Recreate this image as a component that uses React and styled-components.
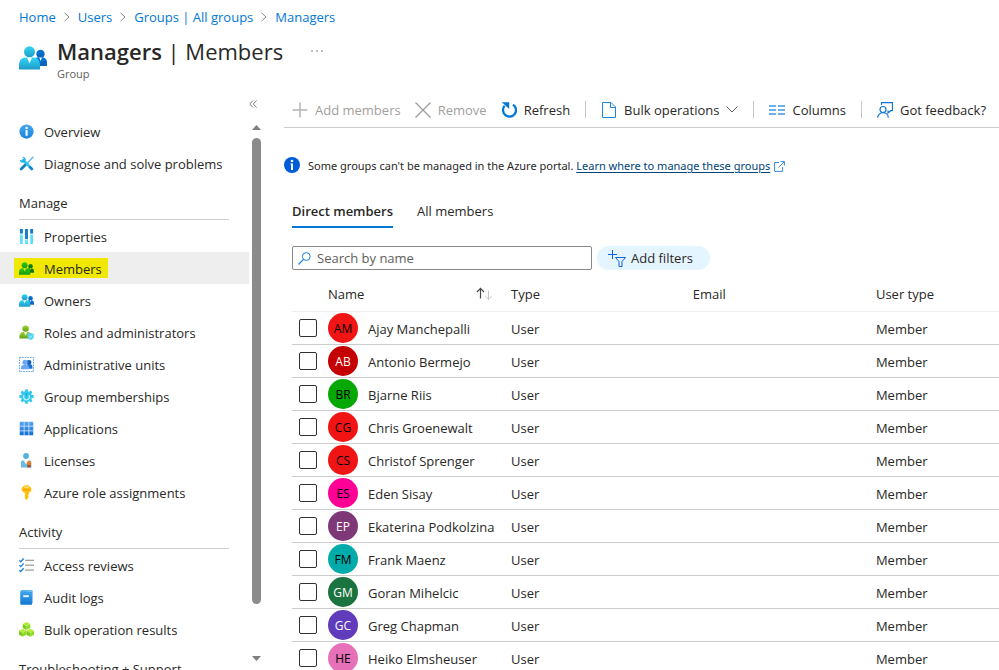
import React from "react";
import styled, { createGlobalStyle, css } from "styled-components";

const color = {
  text: "#292827",
  muted: "#605e5c",
  disabled: "#a19f9d",
  link: "#0078d4",
  rule: "#cccccc",
};

const GlobalStyle = createGlobalStyle`
  *, *::before, *::after { box-sizing: border-box; }
  html, body { margin: 0; padding: 0; background: #ffffff; }
  body {
    color: ${color.text};
    font-family: "Open Sans", "Noto Sans", sans-serif;
    font-size: 13px;
    line-height: 20px;
    overflow: hidden;
  }
  button, input { font: inherit; color: inherit; }
`;

/* ---------- shell ---------- */

const Page = styled.div`
  display: flex;
  flex-direction: column;
  height: 100vh;
  overflow: hidden;
`;

const Breadcrumbs = styled.nav`
  display: flex;
  align-items: center;
  flex: none;
  gap: 7px;
  height: 34px;
  padding: 0 19px;
  white-space: nowrap;
`;

const CrumbLink = styled.a`
  color: ${color.link};
  text-decoration: none;
`;

const Header = styled.header`
  display: flex;
  flex: none;
  height: 58px;
  padding: 2px 19px 0;
`;

const HeaderIcon = styled.div`
  display: flex;
  width: 38px;
  padding-top: 10px;
`;

const TitleBlock = styled.div`
  display: flex;
  flex-direction: column;
`;

const Title = styled.h1`
  margin: 0;
  font-size: 22px;
  font-weight: 400;
  line-height: 30px;
  white-space: nowrap;

  strong { font-weight: 600; }
`;

const Subtitle = styled.span`
  color: ${color.muted};
  font-size: 11px;
  line-height: 16px;
`;

const MoreButton = styled.button`
  display: flex;
  align-items: center;
  justify-content: center;
  width: 16px;
  height: 30px;
  margin-left: 26px;
  padding: 0;
  border: 0;
  background: none;
`;

const Body = styled.div`
  display: flex;
  flex: 1;
  min-height: 0;
`;

/* ---------- sidebar ---------- */

const Sidebar = styled.aside`
  display: grid;
  grid-template-columns: 249px 14px;
  grid-template-rows: 23px minmax(0, 1fr);
  flex: none;
  width: 284px;
`;

const CollapseButton = styled.button`
  grid-column: 2;
  display: flex;
  align-items: center;
  justify-content: center;
  width: 8px;
  padding: 0;
  border: 0;
  background: none;
`;

const Menu = styled.nav`
  grid-column: 1;
  overflow: hidden;
`;

const MenuList = styled.ul`
  margin: 0;
  padding: 0;
  list-style: none;
`;

const MenuHeading = styled.h2`
  display: flex;
  align-items: center;
  height: 41px;
  margin: 0 20px 0 19px;
  padding-top: 8px;
  border-bottom: 1px solid ${color.rule};
  font-size: 13px;
  font-weight: 400;
`;

const MenuLink = styled.a`
  display: flex;
  align-items: center;
  height: 32px;
  padding: 0 14px;
  color: inherit;
  text-decoration: none;
  background: ${(p) => (p.$selected ? "#eeeeee" : "transparent")};
`;

const MenuLabel = styled.span`
  display: flex;
  align-items: center;
  gap: 10px;
  height: 20px;
  padding: 0 6px 0 5px;
  white-space: nowrap;
  background: ${(p) => (p.$highlight ? "#f0e800" : "transparent")};

  svg { flex: none; }
`;

const MenuText = styled.span`
  padding-top: 2px;
`;

const ScrollBar = styled.div`
  grid-column: 2;
  display: flex;
  flex-direction: column;
  align-items: center;
  width: 9px;
  margin-left: 3px;
  padding: 10px 0 9px;
`;

const ScrollTrack = styled.div`
  flex: 1;
  width: 9px;
  margin: 8px 0 0;
`;

const ScrollThumb = styled.div`
  height: 90%;
  border-radius: 5px;
  background: #8b8b8b;
`;

/* ---------- main column ---------- */

const Main = styled.main`
  display: flex;
  flex-direction: column;
  flex: 1;
  min-width: 0;
`;

const Toolbar = styled.div`
  display: flex;
  align-items: center;
  flex: none;
  height: 36px;
  padding-left: 1px;
  border-bottom: 1px solid ${color.rule};
`;

const ToolButton = styled.button`
  display: flex;
  align-items: center;
  gap: 7px;
  flex: none;
  height: 32px;
  padding: 0 7px;
  border: 0;
  background: none;
  white-space: nowrap;

  &:disabled { color: ${color.disabled}; }
`;

const Separator = styled.span`
  flex: none;
  width: 1px;
  height: 17px;
  margin: 0 8px;
  background: #c8c6c4;
`;

const Notice = styled.div`
  display: flex;
  align-items: center;
  flex: none;
  height: 24px;
  margin-top: 25px;
  font-family: "Noto Sans", "Open Sans", sans-serif;
  font-size: 11px;
  white-space: nowrap;

  > svg:first-child { margin-right: 8px; }
`;

const NoticeText = styled.span`
  padding-top: 2px;
`;

const NoticeLink = styled.a`
  display: inline-flex;
  align-items: center;
  gap: 4px;
  color: #004578;
  text-underline-offset: 2px;
`;

const Content = styled.div`
  padding-left: 8px;
`;

const Tabs = styled.div`
  display: flex;
  gap: 24px;
  height: 28px;
  margin-top: 23px;
`;

const Tab = styled.button`
  padding: 0 0 4px;
  border: 0;
  border-bottom: 2px solid transparent;
  background: none;
  white-space: nowrap;
  ${(p) =>
    p.$active &&
    css`
      border-bottom-color: ${color.link};
      font-weight: 600;
    `}
`;

const Filters = styled.div`
  display: flex;
  gap: 5px;
  margin-top: 18px;
`;

const SearchBox = styled.label`
  display: flex;
  align-items: center;
  gap: 6px;
  width: 300px;
  height: 24px;
  padding: 0 5px;
  border: 1px solid #8a8886;
  border-radius: 2px;
`;

const SearchInput = styled.input`
  flex: 1;
  min-width: 0;
  height: 20px;
  padding: 0;
  border: 0;
  outline: 0;
  background: none;

  &::placeholder { color: ${color.muted}; opacity: 1; }
`;

const FilterPill = styled.button`
  display: flex;
  align-items: center;
  gap: 5px;
  height: 24px;
  padding: 0 17px 0 11px;
  border: 0;
  border-radius: 12px;
  background: #e5f5ff;
  white-space: nowrap;
`;

const Table = styled.table`
  width: 100%;
  margin-top: 7px;
  border-collapse: collapse;
  table-layout: fixed;
`;

const Col = styled.col`
  width: ${(p) => p.$width};
`;

const HeadCell = styled.th`
  height: 34px;
  padding: 0;
  border-bottom: 1px solid #eeeeee;
  font-weight: 400;
  text-align: left;
`;

const SortHeader = styled.div`
  display: flex;
  align-items: center;
  justify-content: space-between;
  padding-right: 18px;
`;

const Cell = styled.td`
  height: 33px;
  padding: 2px 0 0;
  border-bottom: 1px solid ${color.rule};
  white-space: nowrap;
`;

const CheckCell = styled(Cell)`
  padding: 0 0 0 7px;
`;

const PersonCell = styled(Cell)`
  padding: 0;
`;

const Check = styled.input`
  display: block;
  appearance: none;
  width: 18px;
  height: 18px;
  margin: 0;
  border: 1px solid #323130;
  border-radius: 2px;
  background: #ffffff;

  &:checked { background: ${color.link}; }
`;

const Person = styled.div`
  display: flex;
  align-items: center;
  gap: 10px;
`;

const PersonName = styled.span`
  padding-top: 2px;
`;

const Avatar = styled.span`
  display: flex;
  align-items: center;
  justify-content: center;
  width: 30px;
  height: 30px;
  padding-top: 2px;
  border-radius: 50%;
  font-size: 12px;
  color: ${(p) => (p.$light ? "#ffffff" : "#000000")};
  background: ${(p) => p.$tone};
`;

/* ---------- icons ---------- */

const Svg = ({ size = 15, w, h, box = "0 0 16 16", children }) => (
  <svg width={w || size} height={h || size} viewBox={box} fill="none" aria-hidden="true">
    {children}
  </svg>
);

const Gradient = ({ id, from, to }) => (
  <linearGradient id={id} x1="0" y1="0" x2="0" y2="1">
    <stop offset="0" stopColor={from} />
    <stop offset="1" stopColor={to} />
  </linearGradient>
);

const PeopleIcon = ({ id, w = 15, h = 13, notch = "#ffffff", front = ["#32d4f5", "#1c9cc8"], back = ["#0078d4", "#1160b8"] }) => (
  <Svg w={w} h={h} box="0 0 28 24">
    <defs>
      <Gradient id={`${id}f`} from={front[0]} to={front[1]} />
      <Gradient id={`${id}b`} from={back[0]} to={back[1]} />
    </defs>
    <circle cx="21.500" cy="8" r="4.200" fill={`url(#${id}b)`} />
    <path d="M14 20v-4.500c0-2.500 2-4 4.500-4h5c2.700 0 4.500 2.300 4.500 5V20z" fill={`url(#${id}b)`} />
    <path d="M20.200 11.500l1.400 3.500 1.400-3.500z" fill={notch} />
    <circle cx="10.500" cy="5.800" r="5.500" fill={`url(#${id}f)`} />
    <path d="M0 23.500v-4.500C0 14.500 2.500 11.500 6.500 11.500h8c4 0 6.500 3 6.500 7.500v4.500z" fill={`url(#${id}f)`} />
    <path d="M8 11.500l2.500 6 2.500-6z" fill={notch} />
  </Svg>
);

const OverviewIcon = () => (
  <Svg>
    <defs><Gradient id="ov" from="#4aa8f0" to="#1684dc" /></defs>
    <circle cx="8" cy="8" r="7.600" fill="url(#ov)" />
    <rect x="7" y="6.500" width="2.200" height="6" rx=".6" fill="#fff" />
    <circle cx="8.100" cy="4.300" r="1.300" fill="#fff" />
  </Svg>
);

const ToolsIcon = () => (
  <Svg>
    <path d="M2.300 13.800L8.500 7.800" stroke="#1482b8" strokeWidth="3" strokeLinecap="round" />
    <path d="M8.500 7.800L13.500 2.600l1.500-1.400" stroke="#69b8e8" strokeWidth="1.500" strokeLinecap="round" />
    <path d="M4.500 4.500l9 9" stroke="#2fc3ee" strokeWidth="2.800" strokeLinecap="round" />
    <path d="M.8 4c0 2.400 2 3.600 4 3.100l2.400-2.400C7.600 2.400 5.900.6 3.500.8l1.600 2L3.500 4.700z" fill="#25b4e4" />
    <path d="M12 10.300l3.500 3.500-1.900 1.900-3.500-3.500z" fill="#1288c8" />
  </Svg>
);

const PropertiesIcon = () => (
  <Svg>
    {[1, 6.500, 12].map((x, i) => (
      <g key={x}>
        <rect x={x} y="0" width="3" height="16" fill="#5ce0f8" />
        <rect x={x} y="0" width="3" height={i === 1 ? 11 : 5} fill="#1878cc" />
        <rect x={x} y={i === 1 ? 11 : 5} width="3" height="1" fill="#fff" />
      </g>
    ))}
  </Svg>
);

const RolesIcon = () => (
  <Svg>
    <defs><Gradient id="rl" from="#9fd435" to="#5e9f12" /></defs>
    <circle cx="7" cy="3.800" r="3.400" fill="url(#rl)" />
    <path d="M.5 14.500V12c0-3 2-4.600 4.400-4.600h4.400c2.200 0 4 1.600 4 4.600v2.500z" fill="url(#rl)" />
    <path d="M5.300 7.500L7 11.500l1.700-4z" fill="#fff" />
    <path d="M12.400 8.600l3.400 1.100v2.700c0 1.800-1.600 3-3.400 3.600-1.800-.6-3.400-1.800-3.400-3.600V9.700z" fill="#54d4f0" />
    <path d="M10.800 12.300l1.300 1.200 2-2.300" stroke="#c8f5ff" strokeWidth=".9" />
  </Svg>
);

const UnitsIcon = () => (
  <Svg>
    <rect x=".5" y=".5" width="15" height="15" stroke="#5aa0de" strokeDasharray="1.800 1" />
    <circle cx="10.600" cy="5.800" r="2.600" fill="#1260b8" />
    <path d="M8 12.500V10c0-1.500 1-2.200 2-2.200h2c1.200 0 2.300 1 2.300 2.200v2.500z" fill="#1b6fd0" />
    <circle cx="6.500" cy="5.600" r="2.800" fill="#6ba6f6" />
    <path d="M2 13v-1.500C2 9.700 3.300 8.500 5 8.500h3c1.700 0 3 1.200 3 3V13z" fill="#6ba6f6" />
  </Svg>
);

const GearIcon = () => (
  <Svg>
    <g fill="#32c8ee">
      {[0, 45, 90, 135].map((a) => (
        <rect key={a} x="6.500" y=".3" width="3" height="15.400" rx=".8" transform={`rotate(${a} 8 8)`} />
      ))}
      <circle cx="8" cy="8" r="5.800" />
    </g>
    <path d="M5.500 6.500a3.100 3.100 0 1 0 5 0" stroke="#c0f0fc" strokeWidth="1.200" />
    <path d="M8 4.500v3.500" stroke="#1ea4d4" strokeWidth="1.200" />
  </Svg>
);

const AppsIcon = () => (
  <Svg>
    <defs><Gradient id="ap" from="#5aa5f2" to="#0f6fd0" /></defs>
    <rect x=".8" y=".8" width="14.400" height="14.400" fill="url(#ap)" />
    <path d="M5.500 0v16M10.500 0v16M0 5.500h16M0 10.500h16" stroke="#cfe4fb" strokeWidth=".9" />
  </Svg>
);

const LicenseIcon = () => (
  <Svg>
    <circle cx="7.500" cy="3.200" r="3.100" fill="#50b4dc" />
    <path d="M2 15.500V9.800c0-1 .7-1.800 1.700-1.800H5l2.500 4L10 8h1.500c1 0 1.700.8 1.700 1.800v5.700z" fill="#6cbce0" />
    <path d="M9 12h3.500v4l-1.700-1.200L9 16z" fill="#a04a20" />
    <circle cx="10.700" cy="10.800" r="2.200" fill="#f07c1c" />
  </Svg>
);

const KeyIcon = () => (
  <Svg>
    <path d="M8 .3c3 0 5.200 1.800 5.200 4.300 0 1.800-1.100 3.100-2.700 3.900V10l-1 .9 1 1-1 1 .7.800L8 16l-1.700-1.500V8.500C4.200 7.900 2.800 6.500 2.800 4.600 2.800 2.100 5 .3 8 .3z" fill="#fdbf10" />
    <path d="M6.200 2.400h3.600" stroke="#fff2b0" strokeWidth="1.200" strokeLinecap="round" />
    <path d="M4.800 5.300h6.400" stroke="#f09a00" strokeWidth="1" />
  </Svg>
);

const ReviewsIcon = () => (
  <Svg>
    {[1, 6.200, 11.400].map((y) => (
      <g key={y}>
        <path d={`M.4 ${y + 1.500}l1.500 1.500L5 ${y - 0.500}`} stroke="#1b83dc" strokeWidth="1.400" />
        <path d={`M6.500 ${y + 1.500}H16`} stroke="#a0a0a0" strokeWidth="1.400" />
      </g>
    ))}
  </Svg>
);

const BookIcon = () => (
  <Svg>
    <defs><Gradient id="bk" from="#46a8ec" to="#1078d0" /></defs>
    <path d="M3 .3h10.700c.8 0 1.300.5 1.300 1.200V14H3z" fill="#8cc8f4" />
    <path d="M2.800 2h11v13.700h-11c-.8 0-1.500-.6-1.500-1.400V2.200C1.300 1.200 2 .3 3 .3h10.600v1z" fill="url(#bk)" />
    <rect x="4.500" y="5.600" width="6" height="2" fill="#eaf6ff" />
  </Svg>
);

const Cube = ({ x, y }) => (
  <g transform={`translate(${x} ${y})`}>
    <path d="M0-4l4 2.100L0 .4l-4-2.300z" fill="#b4ec38" />
    <path d="M-4-1.900L0 .4v4.200l-4-2.200z" fill="#78cc1c" />
    <path d="M4-1.900L0 .4v4.200l4-2.200z" fill="#90dc24" />
  </g>
);

const CubesIcon = () => (
  <Svg>
    <Cube x="8" y="4" />
    <Cube x="4" y="11.200" />
    <Cube x="12" y="11.200" />
  </Svg>
);

const ChevronRight = () => (
  <Svg w={8} h={10} box="0 0 8 10">
    <path d="M1.500.8L6 5 1.500 9.200" stroke="#8a8886" />
  </Svg>
);

const CollapseIcon = () => (
  <Svg w={8} h={8} box="0 0 8 8">
    <path d="M4 .5L.8 4 4 7.500M7.500.5L4.300 4l3.200 3.500" stroke="#6e6e6e" strokeWidth=".9" />
  </Svg>
);

const ArrowMark = ({ down }) => (
  <Svg w={9} h={5} box="0 0 9 5">
    <path d={down ? "M0 0h9L4.500 5z" : "M0 5h9L4.500 0z"} fill="#7e7e7e" />
  </Svg>
);

const MoreIcon = () => (
  <Svg w={12} h={2} box="0 0 12 2">
    <path d="M0 1h2M5 1h2M10 1h2" stroke="#808080" strokeWidth="1.200" />
  </Svg>
);

const PlusIcon = () => (
  <Svg size={16}><path d="M8 .5v15M.5 8h15" stroke="#b4b4b2" strokeWidth="1.500" /></Svg>
);

const CrossIcon = () => (
  <Svg size={16}><path d="M.5.5l15 15M15.500.5l-15 15" stroke="#9a9a98" strokeWidth="1.200" /></Svg>
);

const RefreshIcon = () => (
  <Svg size={16}>
    <path d="M12 2.600A6.500 6.500 0 1 1 3.600 3.800" stroke="#0078d4" strokeWidth="2.300" />
    <path d="M.8.300h7.400v6.700z" fill="#0078d4" />
  </Svg>
);

const DocIcon = () => (
  <Svg size={16}>
    <path d="M1.500.5h8.500l4.500 4.500v10.500h-13z" stroke="#1b86dc" />
    <path d="M9.500.5v5h5" stroke="#1b86dc" />
  </Svg>
);

const ChevronDown = () => (
  <Svg w={12} h={7} box="0 0 12 7"><path d="M.5.5L6 6 11.500.5" stroke="#605e5c" /></Svg>
);

const ColumnsIcon = () => (
  <Svg size={16}>
    <path d="M0 4h7M9 4h7M0 8h7M9 8h7M0 12h7M9 12h7" stroke="#6cb0ec" strokeWidth="2" />
  </Svg>
);

const FeedbackIcon = () => (
  <Svg size={16}>
    <g stroke="#0f74d0" strokeWidth="1.200">
      <path d="M4.500 3V.7h11v8h-1.800L11 11V8.500" />
      <circle cx="6" cy="7.500" r="3" />
      <path d="M.7 15.800c0-3 2.300-5.100 5.300-5.100s5.300 2.100 5.300 5.100" />
    </g>
  </Svg>
);

const InfoIcon = () => (
  <Svg size={16}>
    <circle cx="8" cy="8" r="8" fill="#015cda" />
    <circle cx="8" cy="4" r="1.300" fill="#fff" />
    <path d="M6.500 6.500H9V13H7V7.500h-.5z" fill="#fff" />
  </Svg>
);

const ExternalIcon = () => (
  <Svg size={11} box="0 0 11 11">
    <path d="M5 1.500H.6v8.900h8V6M6.500.6h3.900v3.900M10.200.8L4.500 6.500" stroke="#3b86e0" />
  </Svg>
);

const SearchIcon = () => (
  <Svg size={13} box="0 0 13 13">
    <circle cx="8.300" cy="4.500" r="3.900" stroke="#1b7fd6" />
    <path d="M5.500 7.400L.5 12.500" stroke="#1b7fd6" strokeWidth="1.200" />
  </Svg>
);

const AddFilterIcon = () => (
  <Svg w={18} h={17} box="0 0 18 17">
    <path d="M4.500 0v9M0 4.500h9" stroke="#0f62d8" />
    <path d="M7.500 7.500h10l-3.500 4v5h-3v-5z" stroke="#0f62d8" />
  </Svg>
);

const SortIcon = () => (
  <Svg w={17} h={14} box="0 0 17 14">
    <path d="M4.500 11.500V1.500M1 5l3.500-3.700L8 5" stroke="#4a4a4a" strokeWidth="1.200" />
    <path d="M12.500 3.500v9M9.300 9.300l3.200 3.200 3.200-3.200" stroke="#c4c8ca" />
  </Svg>
);

/* ---------- data ---------- */

const crumbs = ["Home", "Users", "Groups | All groups", "Managers"];

const menu = [
  {
    items: [
      { label: "Overview", icon: <OverviewIcon /> },
      { label: "Diagnose and solve problems", icon: <ToolsIcon /> },
    ],
  },
  {
    heading: "Manage",
    items: [
      { label: "Properties", icon: <PropertiesIcon /> },
      {
        label: "Members",
        selected: true,
        icon: (
          <PeopleIcon id="mem" notch="#f0e800" front={["#2fc818", "#1a9c10"]} back={["#138a10", "#087008"]} />
        ),
      },
      { label: "Owners", icon: <PeopleIcon id="own" /> },
      { label: "Roles and administrators", icon: <RolesIcon /> },
      { label: "Administrative units", icon: <UnitsIcon /> },
      { label: "Group memberships", icon: <GearIcon /> },
      { label: "Applications", icon: <AppsIcon /> },
      { label: "Licenses", icon: <LicenseIcon /> },
      { label: "Azure role assignments", icon: <KeyIcon /> },
    ],
  },
  {
    heading: "Activity",
    items: [
      { label: "Access reviews", icon: <ReviewsIcon /> },
      { label: "Audit logs", icon: <BookIcon /> },
      { label: "Bulk operation results", icon: <CubesIcon /> },
    ],
  },
  { heading: "Troubleshooting + Support", items: [] },
];

const members = [
  { initials: "AM", name: "Ajay Manchepalli", tone: "#f01414" },
  { initials: "AB", name: "Antonio Bermejo", tone: "#c40000", light: true },
  { initials: "BR", name: "Bjarne Riis", tone: "#06a806" },
  { initials: "CG", name: "Chris Groenewalt", tone: "#f01414" },
  { initials: "CS", name: "Christof Sprenger", tone: "#f01414" },
  { initials: "ES", name: "Eden Sisay", tone: "#ff0097" },
  { initials: "EP", name: "Ekaterina Podkolzina", tone: "#7e3878", light: true },
  { initials: "FM", name: "Frank Maenz", tone: "#00aba9" },
  { initials: "GM", name: "Goran Mihelcic", tone: "#1b7440", light: true },
  { initials: "GC", name: "Greg Chapman", tone: "#603cba", light: true },
  { initials: "HE", name: "Heiko Elmsheuser", tone: "#e671b8" },
];

/* ---------- app ---------- */

const SideMenu = () => (
  <Sidebar>
    <CollapseButton aria-label="Collapse menu"><CollapseIcon /></CollapseButton>
    <Menu aria-label="Group">
      {menu.map((section, i) => (
        <React.Fragment key={section.heading || i}>
          {section.heading && <MenuHeading>{section.heading}</MenuHeading>}
          <MenuList>
            {section.items.map((item) => (
              <li key={item.label}>
                <MenuLink href="#" $selected={item.selected} aria-current={item.selected ? "page" : undefined}>
                  <MenuLabel $highlight={item.selected}>
                    {item.icon}
                    <MenuText>{item.label}</MenuText>
                  </MenuLabel>
                </MenuLink>
              </li>
            ))}
          </MenuList>
        </React.Fragment>
      ))}
    </Menu>
    <ScrollBar aria-hidden="true">
      <ArrowMark />
      <ScrollTrack><ScrollThumb /></ScrollTrack>
      <ArrowMark down />
    </ScrollBar>
  </Sidebar>
);

const CommandBar = () => (
  <Toolbar role="toolbar">
    <ToolButton disabled><PlusIcon />Add members</ToolButton>
    <ToolButton disabled><CrossIcon />Remove</ToolButton>
    <ToolButton><RefreshIcon />Refresh</ToolButton>
    <Separator />
    <ToolButton><DocIcon />Bulk operations<ChevronDown /></ToolButton>
    <Separator />
    <ToolButton><ColumnsIcon />Columns</ToolButton>
    <Separator />
    <ToolButton><FeedbackIcon />Got feedback?</ToolButton>
  </Toolbar>
);

const MemberTable = () => (
  <Table>
    <colgroup>
      <Col $width="36px" />
      <Col $width="25.9%" />
      <Col $width="25.7%" />
      <Col $width="25.9%" />
      <Col $width="auto" />
    </colgroup>
    <thead>
      <tr>
        <HeadCell />
        <HeadCell scope="col" aria-sort="ascending">
          <SortHeader>Name<SortIcon /></SortHeader>
        </HeadCell>
        <HeadCell scope="col">Type</HeadCell>
        <HeadCell scope="col">Email</HeadCell>
        <HeadCell scope="col">User type</HeadCell>
      </tr>
    </thead>
    <tbody>
      {members.map((m) => (
        <tr key={m.name}>
          <CheckCell><Check type="checkbox" aria-label={`Select ${m.name}`} /></CheckCell>
          <PersonCell>
            <Person>
              <Avatar $tone={m.tone} $light={m.light}>{m.initials}</Avatar>
              <PersonName>{m.name}</PersonName>
            </Person>
          </PersonCell>
          <Cell>User</Cell>
          <Cell />
          <Cell>Member</Cell>
        </tr>
      ))}
    </tbody>
  </Table>
);

export default function App() {
  return (
    <>
      <GlobalStyle />
      <Page>
        <Breadcrumbs aria-label="Breadcrumb">
          {crumbs.map((c, i) => (
            <React.Fragment key={c}>
              {i > 0 && <ChevronRight />}
              <CrumbLink href="#">{c}</CrumbLink>
            </React.Fragment>
          ))}
        </Breadcrumbs>
        <Header>
          <HeaderIcon><PeopleIcon id="hd" w={28} h={24} /></HeaderIcon>
          <TitleBlock>
            <Title><strong>Managers</strong> | Members</Title>
            <Subtitle>Group</Subtitle>
          </TitleBlock>
          <MoreButton aria-label="More options"><MoreIcon /></MoreButton>
        </Header>
        <Body>
          <SideMenu />
          <Main>
            <CommandBar />
            <Notice>
              <InfoIcon />
              <NoticeText>
                Some groups can't be managed in the Azure portal.{" "}
                <NoticeLink href="#">Learn where to manage these groups<ExternalIcon /></NoticeLink>
              </NoticeText>
            </Notice>
            <Content>
              <Tabs role="tablist">
                <Tab role="tab" aria-selected="true" $active>Direct members</Tab>
                <Tab role="tab" aria-selected="false">All members</Tab>
              </Tabs>
              <Filters>
                <SearchBox>
                  <SearchIcon />
                  <SearchInput type="text" placeholder="Search by name" aria-label="Search by name" />
                </SearchBox>
                <FilterPill><AddFilterIcon />Add filters</FilterPill>
              </Filters>
              <MemberTable />
            </Content>
          </Main>
        </Body>
      </Page>
    </>
  );
}
